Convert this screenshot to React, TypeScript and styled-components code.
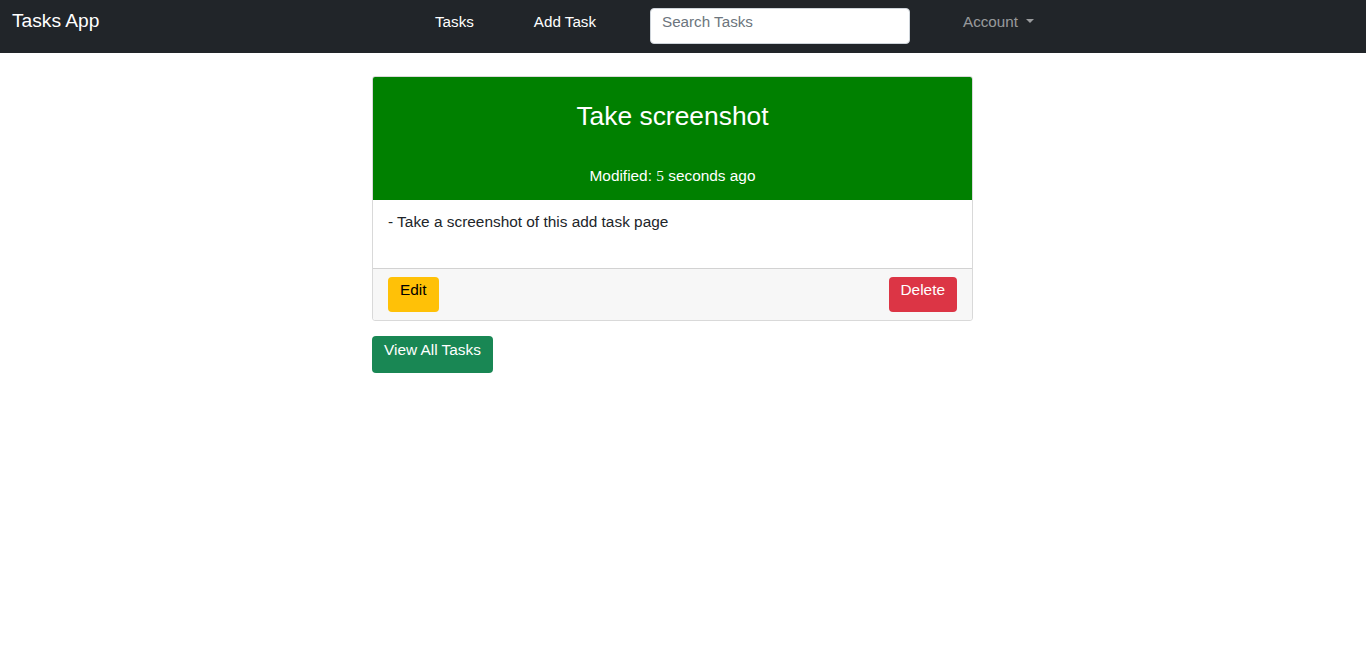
import * as React from "react";
import styled, { createGlobalStyle } from "styled-components";

const GlobalStyle = createGlobalStyle`
  body {
    margin: 0;
    font-family: "Liberation Sans", Arial, sans-serif;
    background: #fff;
    color: #212529;
  }
  * { box-sizing: border-box; }
`;

const NavBar = styled.nav`
  height: 53px;
  background: #212529;
  display: flex;
  align-items: flex-start;
  padding: 0 12px;
`;

const Brand = styled.a`
  color: #fff;
  font-size: 19.2px;
  line-height: 1;
  width: 393px;
  padding-top: 11px;
  text-decoration: none;
`;

const NavLinks = styled.div`
  display: flex;
  align-items: flex-start;
  padding-top: 8px;
`;

const NavLink = styled.a<{ $muted?: boolean }>`
  color: ${({ $muted }) => ($muted ? "rgba(255,255,255,0.55)" : "#fff")};
  font-size: 15.2px;
  line-height: 18px;
  padding: 5px 30px 0;
  display: flex;
  align-items: center;
  gap: 8px;
  text-decoration: none;
`;

const Caret = styled.span`
  width: 0;
  height: 0;
  border-left: 4px solid transparent;
  border-right: 4px solid transparent;
  border-top: 4px solid rgba(255,255,255,0.55);
  margin-top: -2px;
`;

const Search = styled.input`
  width: 260px;
  height: 36px;
  margin: 0 23px 0 24px;
  border: 1px solid #ced4da;
  border-radius: 4px;
  padding: 0 11px 9px;
  font-family: "Liberation Sans", Arial, sans-serif;
  font-size: 15.2px;
  color: #212529;
  &::placeholder { color: #6c757d; }
`;

const Main = styled.main`
  width: 601px;
  margin: 23px 0 0 calc(50% - 311px);
  display: flex;
  flex-direction: column;
  align-items: flex-start;
  gap: 15px;
`;

const Card = styled.div`
  width: 100%;
  border: 1px solid rgba(0,0,0,0.15);
  border-radius: 3px;
  overflow: hidden;
`;

const CardHeader = styled.div`
  background: #008000;
  color: #fff;
  text-align: center;
  height: 123px;
  padding-top: 24px;
`;

const Title = styled.h2`
  margin: 0;
  font-size: 26.4px;
  font-weight: 400;
  line-height: 30px;
`;

const Modified = styled.p`
  margin: 36px 0 0;
  font-size: 15.4px;
  line-height: 18px;
`;

const SerifNum = styled.span`
  font-family: "Liberation Serif", serif;
`;

const CardBody = styled.div`
  height: 68px;
  padding: 13px 15px;
  font-size: 15.4px;
  line-height: 18px;
  color: #212529;
`;

const CardFooter = styled.div`
  background: #f7f7f7;
  border-top: 1px solid rgba(0,0,0,0.15);
  padding: 8px 15px;
  height: 52px;
  display: flex;
  justify-content: space-between;
  align-items: flex-start;
`;

const Button = styled.button<{ $bg: string; $fg: string }>`
  background: ${({ $bg }) => $bg};
  color: ${({ $fg }) => $fg};
  border: none;
  border-radius: 4px;
  font-family: "Liberation Sans", Arial, sans-serif;
  font-size: 15.4px;
  line-height: 18px;
  height: 35px;
  padding: 4px 12px 13px;
  cursor: pointer;
`;

const WideButton = styled(Button)`
  height: 37px;
  padding: 5px 12px 14px;
`;

export default function App() {
  return (
    <>
      <GlobalStyle />
      <NavBar>
        <Brand href="#">Tasks App</Brand>
        <NavLinks>
          <NavLink href="#">Tasks</NavLink>
          <NavLink href="#">Add Task</NavLink>
          <Search placeholder="Search Tasks" />
          <NavLink href="#" $muted>
            Account <Caret />
          </NavLink>
        </NavLinks>
      </NavBar>
      <Main>
        <Card>
          <CardHeader>
            <Title>Take screenshot</Title>
            <Modified>
              Modified: <SerifNum>5</SerifNum> seconds ago
            </Modified>
          </CardHeader>
          <CardBody>- Take a screenshot of this add task page</CardBody>
          <CardFooter>
            <Button $bg="#ffc107" $fg="#000">Edit</Button>
            <Button $bg="#dc3545" $fg="#fff">Delete</Button>
          </CardFooter>
        </Card>
        <WideButton $bg="#198754" $fg="#fff">View All Tasks</WideButton>
      </Main>
    </>
  );
}
